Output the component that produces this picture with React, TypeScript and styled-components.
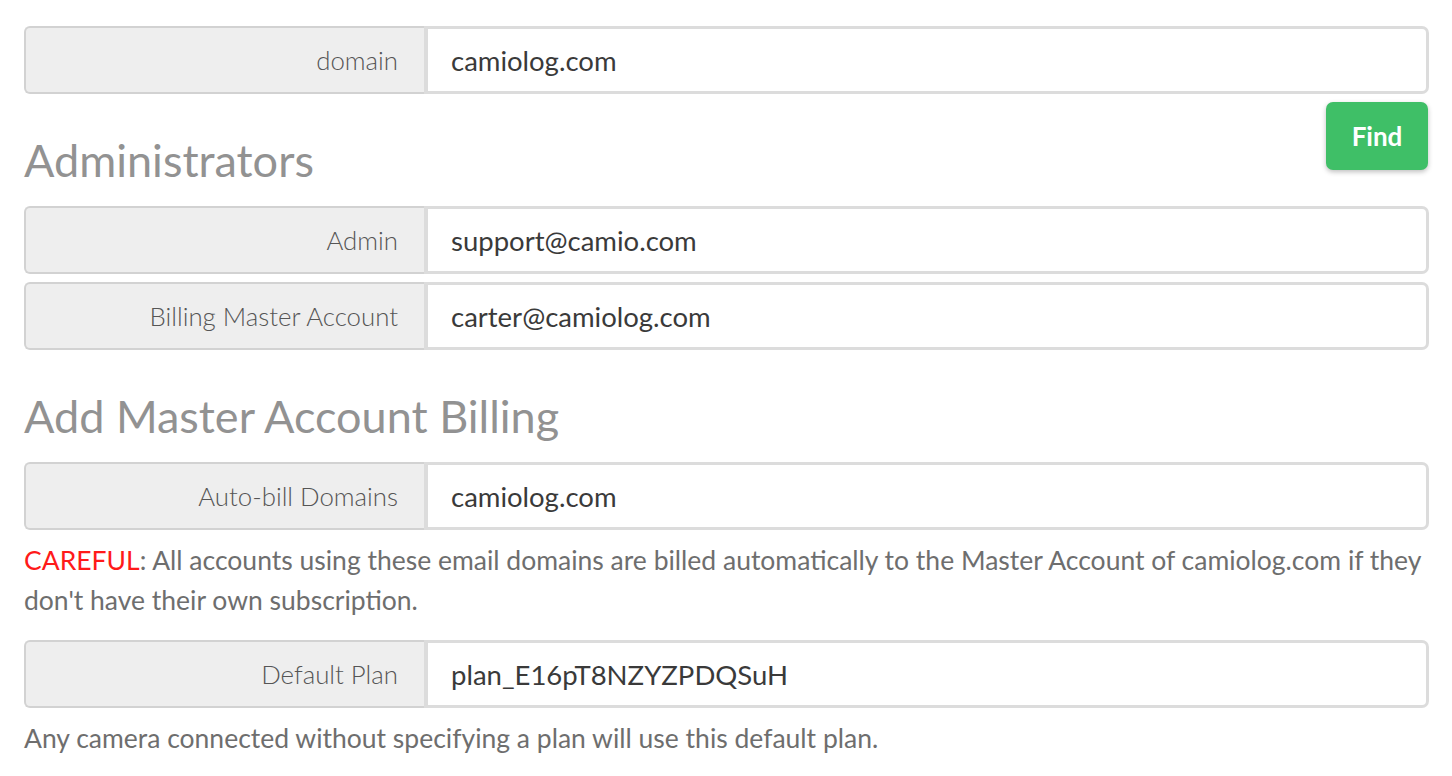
import React from "react";
import styled, { createGlobalStyle } from "styled-components";

const Global = createGlobalStyle`
  html, body { margin: 0; padding: 0; background: #fff; }
  body { font-family: Lato, "Open Sans", sans-serif; -webkit-font-smoothing: antialiased; }
`;

const Page = styled.div`
  display: flex;
  flex-direction: column;
  padding: 26px 23px 0 24px;
`;

const Group = styled.div<{ $gap?: number }>`
  display: flex;
  height: 68px;
  margin-top: ${(p) => p.$gap ?? 0}px;
`;

const Addon = styled.div`
  box-sizing: border-box;
  flex: 0 0 400px;
  display: flex;
  align-items: center;
  justify-content: flex-end;
  padding-right: 26px;
  background: #eeeeee;
  border: 2px solid #d2d2d2;
  border-right: none;
  border-radius: 6px 0 0 6px;
  color: #555;
  font-size: 25.8px;
  font-weight: 300;
`;

const Field = styled.div`
  box-sizing: border-box;
  flex: 1;
  display: flex;
  align-items: center;
  padding-left: 23px;
  background: #fff;
  border: 3px solid #dcdcdc;
  border-left-width: 4px;
  border-radius: 0 7px 7px 0;
  color: #3a3a3a;
  font-size: 27.5px;
`;

const SectionHeader = styled.div`
  display: flex;
  justify-content: space-between;
  align-items: flex-start;
  height: 112px;
  box-sizing: border-box;
  padding-top: 8px;
`;

const Heading = styled.h2`
  margin: 0 0 23px 0;
  align-self: flex-end;
  font-size: 45px;
  line-height: 1;
  font-weight: 400;
  color: #929292;
`;

const FindButton = styled.button`
  width: 102px;
  height: 68px;
  margin-right: 1px;
  border: none;
  border-radius: 7px;
  background: #3fbf67;
  color: #fff;
  font-family: inherit;
  font-size: 26px;
  font-weight: 700;
  box-shadow: 0 2px 5px rgba(0, 0, 0, 0.25);
  cursor: pointer;
`;

const Note = styled.p<{ $bottom?: number }>`
  margin: 10px 0 ${(p) => p.$bottom ?? 0}px 0;
  font-size: 26.5px;
  line-height: 40px;
  color: #6e6e6e;
`;

const Careful = styled.span`
  color: #ff1a1a;
`;

export default function App() {
  return (
    <>
      <Global />
      <Page>
        <Group>
          <Addon>domain</Addon>
          <Field>camiolog.com</Field>
        </Group>
        <SectionHeader>
          <Heading>Administrators</Heading>
          <FindButton>Find</FindButton>
        </SectionHeader>
        <Group>
          <Addon>Admin</Addon>
          <Field>support@camio.com</Field>
        </Group>
        <Group $gap={8}>
          <Addon>Billing Master Account</Addon>
          <Field>carter@camiolog.com</Field>
        </Group>
        <SectionHeader>
          <Heading>Add Master Account Billing</Heading>
        </SectionHeader>
        <Group>
          <Addon>Auto-bill Domains</Addon>
          <Field>camiolog.com</Field>
        </Group>
        <Note $bottom={20}>
          <Careful>CAREFUL</Careful>: All accounts using these email domains are billed
          automatically to the Master Account of camiolog.com if they don't have their own
          subscription.
        </Note>
        <Group>
          <Addon>Default Plan</Addon>
          <Field>plan_E16pT8NZYZPDQSuH</Field>
        </Group>
        <Note>Any camera connected without specifying a plan will use this default plan.</Note>
      </Page>
    </>
  );
}
